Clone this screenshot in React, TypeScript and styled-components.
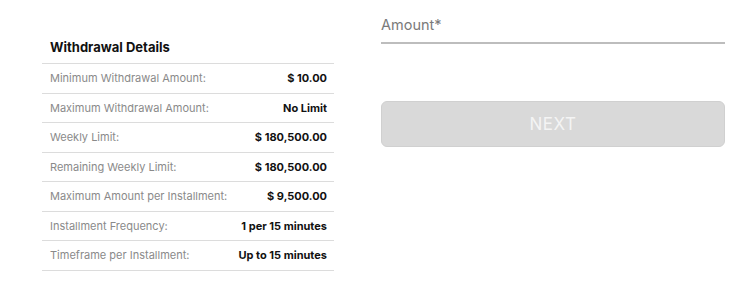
import styled, { createGlobalStyle } from "styled-components";

const GlobalStyle = createGlobalStyle`
    body {
        margin: 0;
        background: #ffffff;
        font-family: Inter, "Noto Sans", sans-serif;
    }
`;

const Page = styled.div`
    display: flex;
    align-items: flex-start;
    gap: 47px;
    padding: 0 15px 0 42px;
`;

const Details = styled.section`
    width: 292px;
    padding-top: 39px;
`;

const Title = styled.h3`
    margin: 0 0 8px;
    padding-left: 8px;
    font-size: 13px;
    line-height: 16px;
    font-weight: 700;
    color: #111;
`;

const Row = styled.div`
    display: flex;
    justify-content: space-between;
    align-items: center;
    height: 28.5px;
    padding: 0 7px 0 8px;
    border-top: 1px solid #dcdcdc;
    &:last-child {
        border-bottom: 1px solid #dcdcdc;
    }
`;

const Label = styled.span`
    font-size: 11px;
    color: #8a8a8a;
`;

const Value = styled.span`
    font-size: 11px;
    font-weight: 700;
    color: #111;
`;

const Form = styled.div`
    flex: 1;
    display: flex;
    flex-direction: column;
`;

const Field = styled.div`
    height: 44px;
    box-sizing: border-box;
    padding-top: 16px;
    border-bottom: 2px solid #bdbdbd;
    font-size: 14.5px;
    line-height: 18px;
    color: #7a7a7a;
`;

const NextButton = styled.button`
    margin-top: 57px;
    height: 46px;
    border: 1px solid #d0d0d0;
    border-radius: 6px;
    background: #d9d9d9;
    color: #f4f4f4;
    font-family: Inter, "Noto Sans", sans-serif;
    font-size: 17px;
    letter-spacing: 0.5px;
`;

const rows = [
    ["Minimum Withdrawal Amount:", "$ 10.00"],
    ["Maximum Withdrawal Amount:", "No Limit"],
    ["Weekly Limit:", "$ 180,500.00"],
    ["Remaining Weekly Limit:", "$ 180,500.00"],
    ["Maximum Amount per Installment:", "$ 9,500.00"],
    ["Installment Frequency:", "1 per 15 minutes"],
    ["Timeframe per Installment:", "Up to 15 minutes"],
];

function App() {
    return (
        <>
            <GlobalStyle />
            <Page>
                <Details>
                    <Title>Withdrawal Details</Title>
                    {rows.map(([label, value]) => (
                        <Row key={label}>
                            <Label>{label}</Label>
                            <Value>{value}</Value>
                        </Row>
                    ))}
                </Details>
                <Form>
                    <Field>Amount*</Field>
                    <NextButton disabled>NEXT</NextButton>
                </Form>
            </Page>
        </>
    );
}
export default App;
